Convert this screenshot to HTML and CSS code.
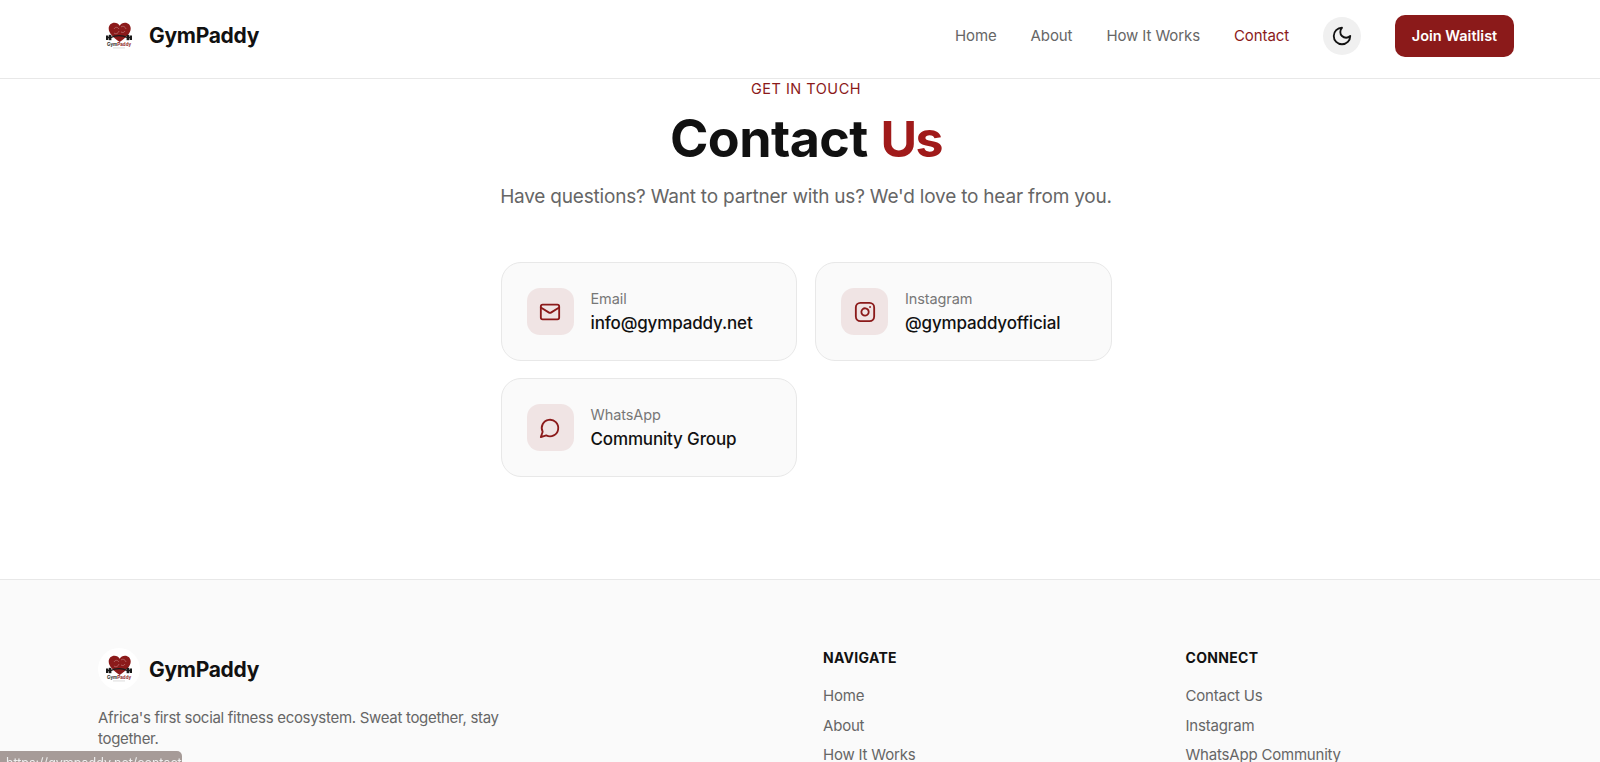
FILE: index.html
```html
<!DOCTYPE html>
<html lang="en">
<head>
  <meta charset="UTF-8">
  <meta name="viewport" content="width=device-width, initial-scale=1.0">
  <title>Contact - GymPaddy</title>
  <link rel="stylesheet" href="styles.css">
</head>
<body>
  <div class="page">
    <header class="nav">
      <a class="brand" href="#">
        <span class="brand-mark">
          <svg class="brand-img" viewBox="0 0 28 28">
            <path d="M14.700 20C7.700 15 3.700 11 3.700 6.500 3.700 3 6.200 .7 9.500 .7 11.700 .7 13.700 1.800 14.700 3.800 15.700 1.800 17.700 .7 19.900 .7 23.200 .7 25.700 3 25.700 6.500 25.700 11 21.700 15 14.700 20Z" fill="#8b1a1a"/>
            <path d="M9 7c1.500-2.500 3.500-2 5 0M16 5c2-1.500 4-.5 5 2M9 11c2 1.500 4 .5 5-2M16 10c2 1 3 .5 4-1" fill="none" stroke="#c98a8a" stroke-width=".6"/>
            <path d="M3 15.500H6M22 15.500H25M6 15.500C10 13 18 13 22 15.500" fill="none" stroke="#1a1a1a" stroke-width="1.400"/>
            <rect x="1" y="13.500" width="2.300" height="4.500" fill="#1a1a1a"/>
            <rect x="3.800" y="12.800" width="2.600" height="5.400" fill="#1a1a1a"/>
            <rect x="21.600" y="12.800" width="2.600" height="5.400" fill="#1a1a1a"/>
            <rect x="24.700" y="13.500" width="2.300" height="4.500" fill="#1a1a1a"/>
            <text x="14" y="24" class="logo-word">Gym<tspan class="logo-word-red">Paddy</tspan></text>
            <rect x="8" y="25.600" width="12" height=".7" fill="#ccc"/>
          </svg>
        </span>
        <span class="brand-name">GymPaddy</span>
      </a>
      <nav class="nav-right">
        <a class="nav-link" href="#">Home</a>
        <a class="nav-link" href="#">About</a>
        <a class="nav-link" href="#">How It Works</a>
        <a class="nav-link active" href="#">Contact</a>
        <button class="theme-btn" aria-label="Toggle theme">
          <svg width="22" height="22" viewBox="0 0 24 24" fill="none" stroke="#111" stroke-width="2" stroke-linecap="round" stroke-linejoin="round"><path d="M12 3a6 6 0 0 0 9 9 9 9 0 1 1-9-9Z"/></svg>
        </button>
        <a class="join-btn" href="#">Join Waitlist</a>
      </nav>
    </header>

    <main class="contact">
      <p class="eyebrow">GET IN TOUCH</p>
      <h1 class="title">Contact <span class="accent">Us</span></h1>
      <p class="lead">Have questions? Want to partner with us? We'd love to hear from you.</p>

      <div class="cards">
        <a class="card" href="#">
          <span class="card-icon">
            <svg width="22" height="22" viewBox="0 0 24 24" fill="none" stroke="currentColor" stroke-width="2" stroke-linecap="round" stroke-linejoin="round"><rect x="2" y="4" width="20" height="16" rx="2"/><path d="m22 7-8.970 5.700a1.940 1.940 0 0 1-2.060 0L2 7"/></svg>
          </span>
          <span class="card-text">
            <span class="card-label">Email</span>
            <span class="card-value">info@gympaddy.net</span>
          </span>
        </a>
        <a class="card" href="#">
          <span class="card-icon">
            <svg width="22" height="22" viewBox="0 0 24 24" fill="none" stroke="currentColor" stroke-width="2" stroke-linecap="round" stroke-linejoin="round"><rect x="2" y="2" width="20" height="20" rx="5" ry="5"/><path d="M16 11.370A4 4 0 1 1 12.630 8 4 4 0 0 1 16 11.370z"/><line x1="17.500" y1="6.500" x2="17.510" y2="6.500"/></svg>
          </span>
          <span class="card-text">
            <span class="card-label">Instagram</span>
            <span class="card-value">@gympaddyofficial</span>
          </span>
        </a>
        <a class="card" href="#">
          <span class="card-icon">
            <svg width="22" height="22" viewBox="0 0 24 24" fill="none" stroke="currentColor" stroke-width="2" stroke-linecap="round" stroke-linejoin="round"><path d="M7.900 20A9 9 0 1 0 4 16.100L2 22Z"/></svg>
          </span>
          <span class="card-text">
            <span class="card-label">WhatsApp</span>
            <span class="card-value">Community Group</span>
          </span>
        </a>
      </div>
    </main>

    <footer class="footer">
      <div class="footer-about">
        <a class="brand" href="#">
          <span class="brand-mark">
            <svg class="brand-img" viewBox="0 0 28 28">
              <path d="M14.700 20C7.700 15 3.700 11 3.700 6.500 3.700 3 6.200 .7 9.500 .7 11.700 .7 13.700 1.800 14.700 3.800 15.700 1.800 17.700 .7 19.900 .7 23.200 .7 25.700 3 25.700 6.500 25.700 11 21.700 15 14.700 20Z" fill="#8b1a1a"/>
              <path d="M9 7c1.500-2.500 3.500-2 5 0M16 5c2-1.500 4-.5 5 2M9 11c2 1.500 4 .5 5-2M16 10c2 1 3 .5 4-1" fill="none" stroke="#c98a8a" stroke-width=".6"/>
              <path d="M3 15.500H6M22 15.500H25M6 15.500C10 13 18 13 22 15.500" fill="none" stroke="#1a1a1a" stroke-width="1.400"/>
              <rect x="1" y="13.500" width="2.300" height="4.500" fill="#1a1a1a"/>
              <rect x="3.800" y="12.800" width="2.600" height="5.400" fill="#1a1a1a"/>
              <rect x="21.600" y="12.800" width="2.600" height="5.400" fill="#1a1a1a"/>
              <rect x="24.700" y="13.500" width="2.300" height="4.500" fill="#1a1a1a"/>
              <text x="14" y="24" class="logo-word">Gym<tspan class="logo-word-red">Paddy</tspan></text>
              <rect x="8" y="25.600" width="12" height=".7" fill="#ccc"/>
            </svg>
          </span>
          <span class="brand-name">GymPaddy</span>
        </a>
        <p class="footer-text">Africa's first social fitness ecosystem. Sweat together, stay together.</p>
      </div>
      <div class="footer-col">
        <h4 class="footer-head">NAVIGATE</h4>
        <a class="footer-link" href="#">Home</a>
        <a class="footer-link" href="#">About</a>
        <a class="footer-link" href="#">How It Works</a>
      </div>
      <div class="footer-col">
        <h4 class="footer-head">CONNECT</h4>
        <a class="footer-link" href="#">Contact Us</a>
        <a class="footer-link" href="#">Instagram</a>
        <a class="footer-link" href="#">WhatsApp Community</a>
      </div>
    </footer>
  </div>

  <div class="status-bar">https://gympaddy.net/contact</div>
</body>
</html>
```

FILE: styles.css
```css
* {
  box-sizing: border-box;
}
html, body {
  margin: 0;
  overflow-x: hidden;
}
body {
  font-family: Inter, "Noto Sans", sans-serif;
  color: #111;
  background: #fff;
}
a {
  color: inherit;
  text-decoration: none;
}
.logo-word {
  font-family: "Liberation Sans", sans-serif;
  font-size: 4.600px;
  font-weight: 700;
  text-anchor: middle;
  fill: #222;
}
.logo-word-red {
  fill: #8b1a1a;
}
.page {
  width: 1612px;
}

.nav {
  display: flex;
  justify-content: space-between;
  align-items: center;
  height: 79px;
  padding: 0 98px 7px;
  border-bottom: 1px solid #e8e8e8;
}
.brand {
  display: flex;
  align-items: center;
  gap: 9px;
}
.brand-mark {
  display: flex;
  align-items: center;
  justify-content: center;
  width: 42px;
  height: 42px;
  border-radius: 50%;
  background: #fff;
}
.brand-img {
  width: 28px;
  height: 28px;
}
.brand-name {
  font-size: 21px;
  font-weight: 700;
  letter-spacing: -0.3px;
}
.nav-right {
  display: flex;
  align-items: center;
  gap: 34px;
}
.nav-link {
  font-size: 15px;
  font-weight: 400;
  color: #666;
  letter-spacing: -0.1px;
}
.nav-link.active {
  color: #8b1a1a;
}
.theme-btn {
  display: flex;
  align-items: center;
  justify-content: center;
  width: 38px;
  height: 38px;
  padding: 0;
  border: none;
  border-radius: 50%;
  background: #f0f0f0;
}
.join-btn {
  display: flex;
  align-items: center;
  justify-content: center;
  width: 119px;
  height: 42px;
  border-radius: 10px;
  background: #8b1a1a;
  color: #fff;
  font-size: 14.500px;
  font-weight: 600;
}

.contact {
  display: flex;
  flex-direction: column;
  align-items: center;
  height: 500px;
}
.eyebrow {
  margin: 1px 0 0;
  font-size: 14.500px;
  line-height: 18px;
  letter-spacing: 0.5px;
  color: #8b1a1a;
}
.title {
  margin: 7px 0 0;
  font-size: 52px;
  line-height: 68px;
  font-weight: 700;
  letter-spacing: -0.6px;
  word-spacing: 1px;
  color: #111;
}
.accent {
  font-size: 50px;
  letter-spacing: -1.5px;
  color: #a01a1a;
}
.lead {
  margin: 9px 0 0;
  font-size: 19px;
  line-height: 30px;
  color: #666;
  letter-spacing: -0.2px;
}
.cards {
  display: grid;
  grid-template-columns: repeat(2, 296.500px);
  gap: 17px 18px;
  margin-top: 50px;
}
.card {
  display: flex;
  align-items: center;
  gap: 17px;
  height: 99px;
  padding: 0 25px;
  border: 1px solid #e8e8e8;
  border-radius: 20px;
  background: #fafafa;
}
.card-icon {
  display: flex;
  align-items: center;
  justify-content: center;
  width: 47px;
  height: 47px;
  border-radius: 13px;
  background: #f0e4e4;
  color: #8b1a1a;
}
.card-text {
  display: flex;
  flex-direction: column;
  gap: 2px;
}
.card-label {
  font-size: 14.500px;
  line-height: 20px;
  color: #777;
  letter-spacing: -0.1px;
}
.card-value {
  font-size: 17px;
  line-height: 24px;
  font-weight: 500;
  color: #111;
  letter-spacing: -0.15px;
}

.footer {
  display: grid;
  grid-template-columns: 725px 362.500px 1fr;
  padding: 68px 98px 0;
  min-height: 240px;
  border-top: 1px solid #e8e8e8;
  background: #fafafa;
}
.footer-about {
  width: 410px;
}
.footer-text {
  margin: 17px 0 0;
  font-size: 15px;
  line-height: 21px;
  color: #666;
  letter-spacing: -0.3px;
}
.footer-col {
  display: flex;
  flex-direction: column;
}
.footer-head {
  margin: 0 0 13px;
  font-size: 14px;
  line-height: 20px;
  font-weight: 700;
  letter-spacing: 0.3px;
  color: #111;
}
.footer-link {
  font-size: 15px;
  line-height: 29.500px;
  color: #666;
  letter-spacing: -0.2px;
}

.status-bar {
  position: fixed;
  left: 0;
  bottom: 0;
  width: 182px;
  height: 11px;
  padding: 0 0 0 6px;
  overflow: hidden;
  border-top-right-radius: 5px;
  background: #a69b98;
  color: #eee;
  font-size: 12.500px;
  line-height: 24px;
  white-space: nowrap;
}
```
